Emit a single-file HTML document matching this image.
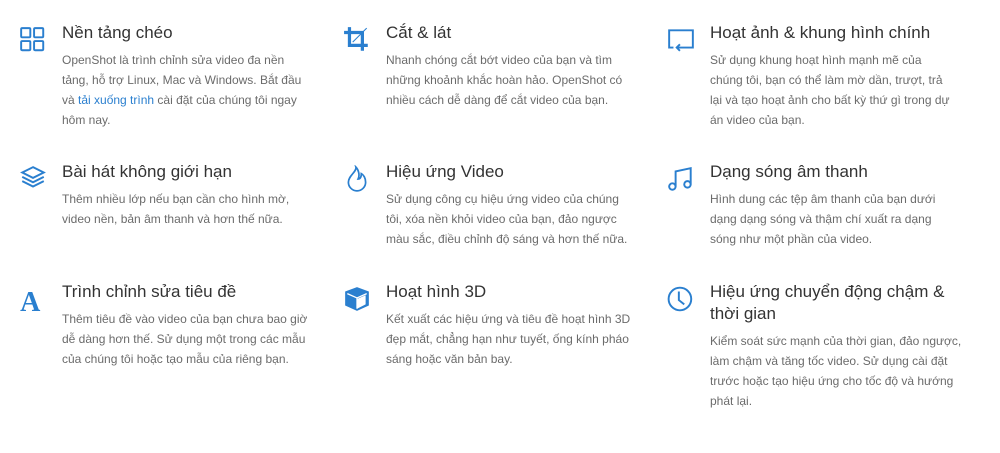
<!DOCTYPE html>
<html><head><meta charset="utf-8"><style>
body{margin:0;width:1000px;height:453px;background:#fff;font-family:"Liberation Sans",sans-serif;position:relative;overflow:hidden}
.f{position:absolute;width:300px}
.ic{position:absolute;left:-43px;top:4px;width:28px;height:28px}
h3{margin:0;font-weight:normal;font-size:17px;line-height:22px;color:#333;white-space:nowrap}
p{margin:6px 0 0;font-size:12px;line-height:20px;color:#6b6b6b;white-space:nowrap}
a{color:#2a7fcf;text-decoration:none}
svg{display:block}
</style></head><body>

<div class="f" style="left:62px;top:22px">
<svg class="ic" viewBox="0 0 26 26" fill="none" stroke="#2a7fcf" stroke-width="1.8"><rect x="2" y="2" width="8.5" height="8.5" rx="1"/><rect x="14" y="2" width="8.5" height="8.5" rx="1"/><rect x="2" y="14" width="8.5" height="8.5" rx="1"/><rect x="14" y="14" width="8.5" height="8.5" rx="1"/></svg>
<h3>Nền tảng chéo</h3>
<p>OpenShot là trình chỉnh sửa video đa nền<br>tảng, hỗ trợ Linux, Mac và Windows. Bắt đầu<br>và <a>tải xuống trình</a> cài đặt của chúng tôi ngay<br>hôm nay.</p></div>

<div class="f" style="left:386px;top:22px">
<svg class="ic" viewBox="0 0 26 26" fill="none" stroke="#2a7fcf"><path d="M6 1v17h17M1 6h17v17" stroke-width="3"/><path d="M9 15l13-13" stroke-width="1"/></svg>
<h3>Cắt &amp; lát</h3>
<p>Nhanh chóng cắt bớt video của bạn và tìm<br>những khoảnh khắc hoàn hảo. OpenShot có<br>nhiều cách dễ dàng để cắt video của bạn.</p></div>

<div class="f" style="left:710px;top:22px">
<svg class="ic" viewBox="0 0 26 26" fill="none" stroke="#2a7fcf" stroke-width="1.8"><path d="M6 20H2V4h22v16H9"/><path d="M12 17l-3 3 3 3"/></svg>
<h3>Hoạt ảnh &amp; khung hình chính</h3>
<p>Sử dụng khung hoạt hình mạnh mẽ của<br>chúng tôi, bạn có thể làm mờ dần, trượt, trả<br>lại và tạo hoạt ảnh cho bất kỳ thứ gì trong dự<br>án video của bạn.</p></div>

<div class="f" style="left:62px;top:161px">
<svg class="ic" viewBox="0 0 26 26" fill="none" stroke="#2a7fcf" stroke-width="1.8"><path d="M13 2l10 5-10 5-10-5z"/><path d="M3 11l10 5 10-5"/><path d="M3 15l10 5 10-5"/></svg>
<h3>Bài hát không giới hạn</h3>
<p>Thêm nhiều lớp nếu bạn cần cho hình mờ,<br>video nền, bản âm thanh và hơn thế nữa.</p></div>

<div class="f" style="left:386px;top:161px">
<svg class="ic" viewBox="0 0 26 26" fill="none" stroke="#2a7fcf" stroke-width="1.6"><path d="M12 2c1 4-7 8-7 14a8 8 0 0016 0c0-4-2-7-4-8 0 3-1 5-3 5 2-4 0-9-2-11z"/></svg>
<h3>Hiệu ứng Video</h3>
<p>Sử dụng công cụ hiệu ứng video của chúng<br>tôi, xóa nền khỏi video của bạn, đảo ngược<br>màu sắc, điều chỉnh độ sáng và hơn thế nữa.</p></div>

<div class="f" style="left:710px;top:161px">
<svg class="ic" viewBox="0 0 26 26" fill="none" stroke="#2a7fcf" stroke-width="1.8"><path d="M8 20V6l14-3v15"/><circle cx="5" cy="20" r="3"/><circle cx="19" cy="18" r="3"/></svg>
<h3>Dạng sóng âm thanh</h3>
<p>Hình dung các tệp âm thanh của bạn dưới<br>dạng dạng sóng và thậm chí xuất ra dạng<br>sóng như một phần của video.</p></div>

<div class="f" style="left:62px;top:281px">
<svg class="ic" viewBox="0 0 26 26"><text x="1" y="24" font-family="Liberation Serif,serif" font-weight="bold" font-size="26" fill="#2a7fcf">A</text></svg>
<h3>Trình chỉnh sửa tiêu đề</h3>
<p>Thêm tiêu đề vào video của bạn chưa bao giờ<br>dễ dàng hơn thế. Sử dụng một trong các mẫu<br>của chúng tôi hoặc tạo mẫu của riêng bạn.</p></div>

<div class="f" style="left:386px;top:281px">
<svg class="ic" viewBox="0 0 26 26"><path d="M13 2l11 4v13l-11 5-11-5V6z" fill="#2a7fcf"/><path d="M4 8l9 4 9-4M13 12v10" stroke="#fff" stroke-width="1.2" fill="none"/><path d="M13 13l8-3.5v8.5l-8 4z" fill="#fff"/></svg>
<h3>Hoạt hình 3D</h3>
<p>Kết xuất các hiệu ứng và tiêu đề hoạt hình 3D<br>đẹp mắt, chẳng hạn như tuyết, ống kính pháo<br>sáng hoặc văn bản bay.</p></div>

<div class="f" style="left:710px;top:281px">
<svg class="ic" viewBox="0 0 26 26" fill="none" stroke="#2a7fcf" stroke-width="1.8"><circle cx="12" cy="13" r="10.5"/><path d="M11 6v8l5 4"/></svg>
<h3>Hiệu ứng chuyển động chậm &amp;<br>thời gian</h3>
<p>Kiểm soát sức mạnh của thời gian, đảo ngược,<br>làm chậm và tăng tốc video. Sử dụng cài đặt<br>trước hoặc tạo hiệu ứng cho tốc độ và hướng<br>phát lại.</p></div>

</body></html>
